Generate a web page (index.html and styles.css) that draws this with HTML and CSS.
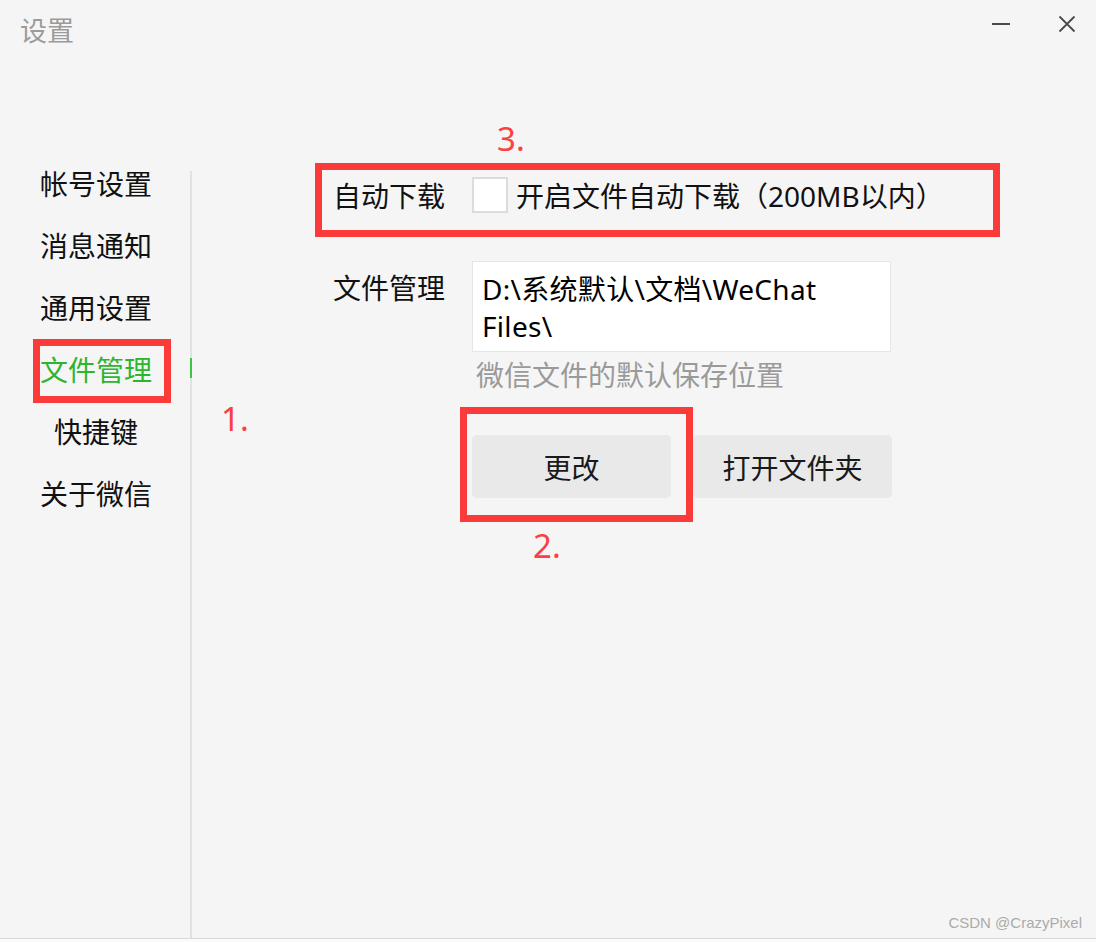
FILE: index.html
```html
<!DOCTYPE html>
<html lang="zh-CN">
<head>
<meta charset="utf-8">
<title>设置</title>
<link rel="stylesheet" href="styles.css">
</head>
<body>
<div class="window">
  <header class="titlebar">
    <div class="title">设置</div>
    <div class="controls">
      <svg class="ctl" width="18" height="18" viewBox="0 0 18 18"><line x1="0" y1="9" x2="18" y2="9" stroke="#4a4a4a" stroke-width="2"/></svg>
      <svg class="ctl" width="18" height="18" viewBox="0 0 18 18"><path d="M1.5 1.5 L16.5 16.5 M16.5 1.5 L1.5 16.5" stroke="#4a4a4a" stroke-width="1.8" fill="none"/></svg>
    </div>
  </header>
  <main class="main">
    <nav class="sidebar">
      <div class="nav-item">帐号设置</div>
      <div class="nav-item">消息通知</div>
      <div class="nav-item">通用设置</div>
      <div class="nav-item active">文件管理</div>
      <div class="nav-item">快捷键</div>
      <div class="nav-item">关于微信</div>
    </nav>
    <div class="divider"><span class="indicator"></span></div>
    <section class="content">
      <div class="row row-download">
        <div class="label">自动下载</div>
        <div class="inline">
          <span class="checkbox"></span>
          <span class="check-text">开启文件自动下载（200MB以内）</span>
        </div>
      </div>
      <div class="row row-files">
        <div class="label label-files">文件管理</div>
        <div class="field">
          <div class="path-box">D:\系统默认\文档\WeChat Files\</div>
          <div class="hint">微信文件的默认保存位置</div>
          <div class="buttons">
            <button class="btn">更改</button>
            <button class="btn">打开文件夹</button>
          </div>
        </div>
      </div>
    </section>
  </main>

  <div class="mark mark-nav"></div>
  <div class="mark mark-download"></div>
  <div class="mark mark-change"></div>
  <div class="num num-1">1.</div>
  <div class="num num-2">2.</div>
  <div class="num num-3">3.</div>
  <div class="watermark">CSDN @CrazyPixel</div>
</div>
</body>
</html>
```

FILE: styles.css
```css
* { box-sizing: border-box; }

html, body {
  margin: 0;
  padding: 0;
  background: #fbfbfb;
}

body {
  font-family: "Noto Sans", "Noto Sans CJK SC", sans-serif;
  color: #141414;
}

.window {
  position: relative;
  width: 1096px;
  height: 939px;
  background: #f5f5f5;
  border-bottom: 1px solid #d9d9d9;
  display: flex;
  flex-direction: column;
  overflow: hidden;
}

.titlebar {
  display: flex;
  justify-content: space-between;
  align-items: flex-start;
  height: 153px;
}

.title {
  padding-left: 20px;
  font-size: 27px;
  line-height: 62px;
  color: #9b9b9b;
}

.controls {
  display: flex;
  gap: 48px;
  margin-top: 15px;
  margin-right: 20px;
}

.ctl { display: block; }

.main {
  flex: 1;
  display: flex;
}

.sidebar {
  width: 190px;
  display: flex;
  flex-direction: column;
}

.nav-item {
  font-size: 28px;
  line-height: 62px;
  text-align: center;
  padding-left: 2px;
  color: #111;
}

.nav-item.active {
  color: #2db52d;
}

.divider {
  position: relative;
  width: 2px;
  margin-top: 18px;
  background: #e2e2e2;
}

.indicator {
  position: absolute;
  left: 0;
  top: 187px;
  width: 2px;
  height: 20px;
  background: #3cc83c;
}

.content {
  flex: 1;
  padding-left: 141px;
  padding-top: 12px;
  display: flex;
  flex-direction: column;
}

.row {
  display: flex;
}

.label {
  width: 139px;
  font-size: 28px;
  line-height: 62px;
  color: #111;
}

.row-download {
  height: 62px;
  align-items: center;
}

.inline {
  display: flex;
  flex-direction: row;
  align-items: center;
}

.checkbox {
  display: block;
  width: 36px;
  height: 36px;
  background: #fff;
  border: 2px solid #dcdcdc;
  margin-right: 8px;
  margin-top: -2px;
}

.check-text {
  font-size: 28px;
  line-height: 62px;
  color: #111;
}

.row-files {
  margin-top: 34px;
}

.label-files {
  line-height: 54px;
}

.field {
  display: flex;
  flex-direction: column;
}

.path-box {
  width: 419px;
  height: 91px;
  background: #fff;
  border: 1px solid #e6e6e6;
  padding: 9px 30px 0 9px;
  font-size: 28px;
  line-height: 37px;
  letter-spacing: 0.3px;
  color: #000;
}

.hint {
  padding-left: 4px;
  font-size: 28px;
  line-height: 46px;
  color: #9a9a9a;
}

.buttons {
  margin-top: 37px;
  display: flex;
  gap: 22px;
}

.btn {
  width: 199px;
  height: 63px;
  border: none;
  border-radius: 5px;
  background: #e9e9e9;
  font-family: "Noto Sans", "Noto Sans CJK SC", sans-serif;
  font-size: 28px;
  color: #1a1a1a;
  padding: 0;
}

.mark {
  position: absolute;
  border: 7px solid #fb3a3a;
}

.mark-nav { left: 33px; top: 339px; width: 138px; height: 64px; }
.mark-download { left: 315px; top: 163px; width: 685px; height: 74px; }
.mark-change { left: 460px; top: 407px; width: 233px; height: 115px; }

.num {
  position: absolute;
  font-family: "Noto Sans", sans-serif;
  font-size: 33px;
  line-height: 40px;
  color: #fa4040;
}

.num-1 { left: 221px; top: 399px; }
.num-2 { left: 533px; top: 526px; }
.num-3 { left: 497px; top: 119px; }

.watermark {
  position: absolute;
  right: 14px;
  top: 914px;
  font-family: "Liberation Sans", sans-serif;
  font-size: 15px;
  line-height: 18px;
  color: #ababab;
}
```
